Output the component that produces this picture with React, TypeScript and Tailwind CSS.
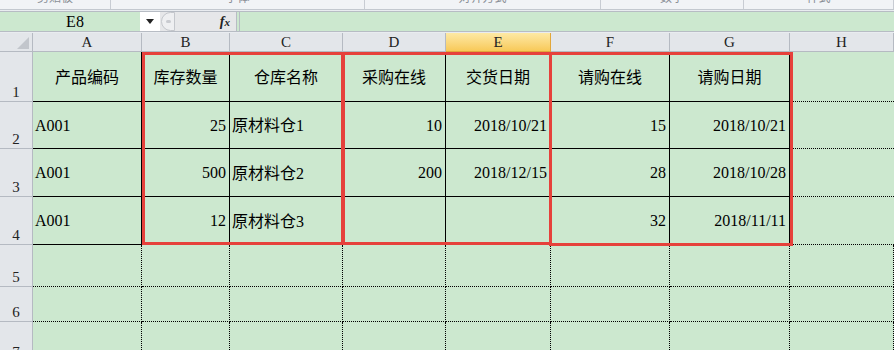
import React from 'react'

type Cell = { t?: string; align?: 'l' | 'r' | 'c' }

const COLS = ['A', 'B', 'C', 'D', 'E', 'F', 'G', 'H']

const DATA: Cell[][] = [
  [
    { t: '产品编码', align: 'c' },
    { t: '库存数量', align: 'c' },
    { t: '仓库名称', align: 'c' },
    { t: '采购在线', align: 'c' },
    { t: '交货日期', align: 'c' },
    { t: '请购在线', align: 'c' },
    { t: '请购日期', align: 'c' },
  ],
  [
    { t: 'A001', align: 'l' },
    { t: '25', align: 'r' },
    { t: '原材料仓1', align: 'l' },
    { t: '10', align: 'r' },
    { t: '2018/10/21', align: 'r' },
    { t: '15', align: 'r' },
    { t: '2018/10/21', align: 'r' },
  ],
  [
    { t: 'A001', align: 'l' },
    { t: '500', align: 'r' },
    { t: '原材料仓2', align: 'l' },
    { t: '200', align: 'r' },
    { t: '2018/12/15', align: 'r' },
    { t: '28', align: 'r' },
    { t: '2018/10/28', align: 'r' },
  ],
  [
    { t: 'A001', align: 'l' },
    { t: '12', align: 'r' },
    { t: '原材料仓3', align: 'l' },
    {},
    {},
    { t: '32', align: 'r' },
    { t: '2018/11/11', align: 'r' },
  ],
]

const RIBBON = [
  { w: 'w-[111px]', t: '剪贴板' },
  { w: 'w-[254px]', t: '字体' },
  { w: 'w-[236px]', t: '对齐方式' },
  { w: 'w-[143px]', t: '数字' },
  { w: 'flex-1', t: '样式' },
]

const cjk = "font-['Noto_Sans_CJK_SC',sans-serif] text-[16px]"
const latin = "font-['Liberation_Serif',serif] text-[16px]"

// splits mixed text so latin parts use the serif face
function CellText({ t }: { t: string }) {
  const parts = t.match(/[\u4e00-\u9fff]+|[^\u4e00-\u9fff]+/g) || []
  return (
    <span className="whitespace-nowrap text-black">
      {parts.map((p, i) =>
        /[\u4e00-\u9fff]/.test(p) ? (
          <span key={i} className={cjk}>{p}</span>
        ) : (
          <span key={i} className={latin}>{p}</span>
        ),
      )}
    </span>
  )
}

export default function App() {
  const rowNums = [1, 2, 3, 4, 5, 6, 7]
  return (
    <div className="w-[894px] h-[350px] overflow-hidden bg-[#e9ecf0] select-none">
      {/* ribbon group labels, cut off at the top */}
      <div className="flex h-[10px] border-b border-[#c3c8cf] bg-[#f1f3f6] overflow-hidden">
        {RIBBON.map((r, i) => (
          <div key={i} className={`${r.w} border-r border-[#c8ccd3] flex justify-center overflow-hidden`}>
            <span className="mt-[-11px] text-[12px] leading-[16px] text-[#8a8f96] font-['Noto_Sans_CJK_SC',sans-serif]">{r.t}</span>
          </div>
        ))}
      </div>

      {/* formula bar */}
      <div className="mt-[1px] flex h-[21px] border-y border-[#b7bcc4] bg-[#cce8cf]">
        <div className="w-[140px] pl-[10px] flex items-center justify-center font-['Liberation_Serif',serif] text-[16px] text-black">
          E8
        </div>
        <div className="w-[20px] bg-white flex items-center justify-center">
          <svg width="8" height="5" viewBox="0 0 8 5">
            <path d="M0 0h8L4 5z" fill="#222" />
          </svg>
        </div>
        <div className="w-[77px] bg-[#e6e7e9] flex items-center border-r border-[#b7bcc4]">
          <div className="ml-[1px] w-[14px] h-[19px] rounded-l-full border border-[#c4c7cc] bg-[#eeeff1] flex items-center justify-center">
            <div className="w-[5px] h-[3px] rounded-full bg-[#c9cbd0]" />
          </div>
          <div className="flex-1" />
          <span className="mr-[6px] font-['Liberation_Serif',serif] italic font-bold text-[14px] text-[#222]">
            f<span className="text-[11px]">x</span>
          </span>
        </div>
        <div className="flex-1 ml-[2px] border-l border-[#b7bcc4]" />
      </div>

      {/* sheet */}
      <div className="relative mt-[1px]">
        <div className="grid grid-cols-[33px_109px_88px_113px_103px_105px_119px_120px_104px] grid-rows-[19px_50px_47px_48px_48px_42px_35px_40px]">
          {/* corner */}
          <div className="bg-[#e3e6ea] border-r border-b border-[#b5bac2] flex items-end justify-end pr-[3px] pb-[2px]">
            <svg width="12" height="12" viewBox="0 0 12 12">
              <path d="M12 0V12H0z" fill="#c2c6cc" />
            </svg>
          </div>
          {COLS.map((c) => (
            <div
              key={c}
              className={`border-r border-b flex items-center justify-center font-['Liberation_Serif',serif] text-[15px] text-[#222] ${
                c === 'E'
                  ? 'bg-linear-to-b from-[#fde9a4] to-[#f8c957] border-[#e2a73a]'
                  : 'bg-[#e3e6ea] border-[#b5bac2]'
              }`}
            >
              {c}
            </div>
          ))}

          {rowNums.map((n) => (
            <React.Fragment key={n}>
              <div className="bg-[#e3e6ea] border-r border-b border-[#b5bac2] flex items-end justify-center pb-[1px] font-['Liberation_Serif',serif] text-[15px] leading-[16px] text-[#222]">
                {n}
              </div>
              {COLS.map((c, ci) => {
                const inTable = n <= 4 && ci < 7
                const cell = inTable ? DATA[n - 1][ci] : {}
                const just =
                  cell.align === 'c' ? 'justify-center' : cell.align === 'r' ? 'justify-end pr-[3px]' : 'justify-start pl-[2px]'
                const border = inTable
                  ? 'border-r border-b border-black'
                  : n <= 4
                    ? 'border-b border-dotted border-black'
                    : n === 7
                      ? 'border-r border-dotted border-black'
                      : 'border-r border-b border-dotted border-black'
                return (
                  <div key={c} className={`bg-[#cce8cf] flex items-center ${just} ${border}`}>
                    {cell.t && <CellText t={cell.t} />}
                  </div>
                )
              })}
            </React.Fragment>
          ))}
        </div>

        {/* red highlight frames */}
        <div className="absolute left-[142px] top-[19px] w-[203px] h-[193px] border-[3px] border-[#e6413b] pointer-events-none" />
        <div className="absolute left-[341px] top-[19px] w-[211px] h-[193px] border-[3px] border-[#e6413b] pointer-events-none" />
        <div className="absolute left-[549px] top-[19px] w-[244px] h-[194px] border-[3px] border-[#e6413b] pointer-events-none" />
      </div>
    </div>
  )
}
